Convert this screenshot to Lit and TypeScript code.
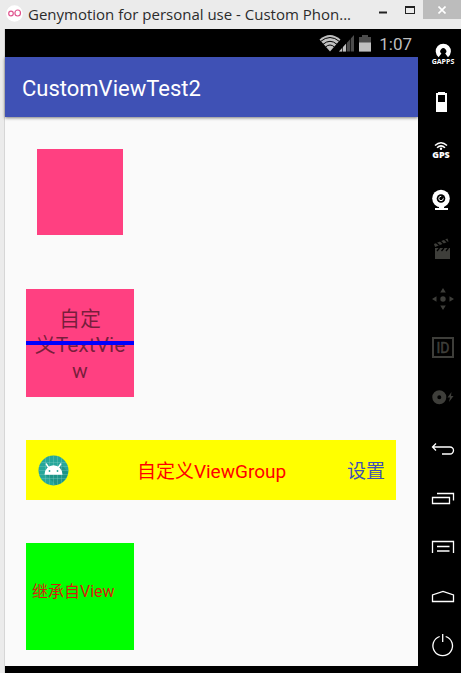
import { LitElement, html, css, svg } from "lit";
import { customElement } from "lit/decorators.js";

interface Tool {
  label: string;
  dim?: boolean;
  art: unknown;
}

const emulatorTools: Tool[] = [
  {
    label: "Open GAPPS",
    art: svg`<path fill="currentColor" d="M14.6 28.2A7.6 7.6 0 1 1 24 28.2L21.2 24.6A3 3 0 1 0 17.4 24.6Z"/>
      <path d="M19.3 21.5V28" stroke="#000" stroke-width="2"/>
      <text x="19" y="35" class="tiny" text-anchor="middle">GAPPS</text>`,
  },
  {
    label: "Battery",
    art: svg`<path fill="currentColor" fill-rule="evenodd" d="M14 14H21V15H23V34H12V15H14ZM14 17V24H21V17Z"/>`,
  },
  {
    label: "GPS",
    art: svg`<g fill="none" stroke="currentColor" stroke-width="1.5">
        <path d="M11 18.5Q17 13 23 18.5"/><path d="M13 20.7Q17 17 21 20.7"/>
      </g><circle cx="17" cy="21.8" r="1.2" fill="currentColor"/>
      <text x="17" y="31" class="small" text-anchor="middle">GPS</text>`,
  },
  {
    label: "Camera",
    art: svg`<circle cx="17" cy="22.5" r="8.8" fill="currentColor"/>
      <path d="M15 30H20V33H15Z" fill="currentColor"/><path d="M11 32H24V34H11Z" fill="currentColor"/>
      <circle cx="17" cy="22.5" r="4.3" fill="#000"/>
      <circle cx="17" cy="22.5" r="2.2" fill="none" stroke="currentColor" stroke-width="1"/>
      <circle cx="18.2" cy="21.3" r="1.4" fill="#000"/>`,
  },
  {
    label: "Screencast",
    dim: true,
    art: svg`<path fill="currentColor" d="M11 23H26V34H11Z"/>
      <path d="M10.5 20.5L24 15" stroke="currentColor" stroke-width="3"/>
      <path d="M12 17.5L15.5 20.5M16 15.8L19.5 19M20 14L23.5 17.5M13 26L15.5 23M17.5 26L20 23M22 26L24.500 23" stroke="#000" stroke-width="1.3"/>`,
  },
  {
    label: "Remote control",
    dim: true,
    art: svg`<g fill="currentColor"><circle cx="19" cy="25" r="2.7"/>
      <path d="M19 14L21.800 18.500H16.200ZM19 36L16.200 31.500H21.800ZM8 25L12.500 22.200V27.800ZM30 25L25.500 27.800V22.200Z"/></g>`,
  },
  {
    label: "Identifiers",
    dim: true,
    art: svg`<rect x="9" y="15" width="20" height="19" fill="none" stroke="currentColor" stroke-width="2"/>
      <text x="19" y="30" class="id" text-anchor="middle">ID</text>`,
  },
  {
    label: "Disk I/O",
    dim: true,
    art: svg`<path fill="currentColor" fill-rule="evenodd" d="M8.300 25.300a7 7 0 1 0 14 0a7 7 0 1 0-14 0ZM13.300 25.300a2 2 0 1 1 4 0a2 2 0 1 1-4 0Z"/>
      <path fill="currentColor" d="M27.500 20L23.500 25.600H26L25 30L29.500 24H27Z"/>`,
  },
];

const navigationTools: Tool[] = [
  { label: "Back", art: svg`<path class="line" d="M12 19.500L8.500 23L12 26.500M8.500 23H26A3.400 3.400 0 0 1 26 30H18"/>` },
  { label: "Recent apps", art: svg`<path class="line" d="M8.500 24.500H25.500V30.500H8.500ZM13 20.500H29.500V27.500"/>` },
  { label: "Menu", art: svg`<path class="line" d="M8.500 31V19.500H29.500V31M13 24.500H25.500M13 29H25.500"/>` },
  { label: "Home", art: svg`<path class="line" d="M8.500 30.500V24L19 20.500L29.500 24V30.500Z"/>` },
  { label: "Power", art: svg`<path class="line" d="M15.700 16.500A9.800 9.800 0 1 0 21.700 16.500M18.700 14V22"/>` },
];

@customElement("tool-rail")
export class ToolRail extends LitElement {
  static styles = css`
    :host { display: flex; flex-direction: column; gap: 3px; background: #000; }
    .group { display: flex; flex-direction: column; }
    button {
      border: 0; padding: 0 0 0 6px; margin: 0; background: none; color: #fff;
      height: 49px; display: flex; cursor: pointer;
    }
    button.dim { color: #3e3e3a; }
    svg { width: 37px; height: 49px; display: block; }
    text { fill: currentColor; font-family: "Open Sans", "Noto Sans", sans-serif; }
    .tiny { font-size: 7px; font-weight: 700; }
    .small { font-size: 9px; font-weight: 800; }
    .id { font: 400 14px Roboto, sans-serif; stroke: currentColor; stroke-width: 0.5px; }
    .line { fill: none; stroke: currentColor; stroke-width: 1.3; }
  `;

  private group(tools: Tool[]) {
    return html`<div class="group">
      ${tools.map(
        (t) => html`<button class=${t.dim ? "dim" : ""} aria-label=${t.label}>
          <svg viewBox="0 0 37 49" aria-hidden="true">${t.art}</svg>
        </button>`
      )}
    </div>`;
  }

  render() {
    return html`${this.group(emulatorTools)}${this.group(navigationTools)}`;
  }
}

@customElement("app-root")
export class AppRoot extends LitElement {
  static styles = css`
    :host {
      display: flex; flex-direction: column; min-height: 100vh; background: #ebebeb;
      font-family: Roboto, "Noto Sans CJK SC", sans-serif;
    }
    * { box-sizing: border-box; }
    button { border: 0; margin: 0; padding: 0; background: none; font: inherit; cursor: pointer; }
    svg { display: block; }

    .titlebar { display: flex; height: 29px; padding-left: 6px; }
    .logo { width: 17px; height: 17px; margin: 5px 5px 0 0; }
    .caption {
      flex: 1; min-width: 0; margin: 0; color: #2b2b2b; white-space: nowrap; overflow: hidden;
      font: 400 15px/28px "Open Sans", "Noto Sans", sans-serif;
    }
    .controls { display: flex; }
    .control { height: 19px; display: flex; align-items: center; justify-content: center; color: #222; }
    .minimize { width: 28px; }
    .maximize { width: 26px; }
    .close { width: 38px; background: #bcbcbc; color: #fff; }

    .workspace { flex: 1; display: grid; grid-template-columns: 1fr 43px; margin-left: 4px; border-left: 1px solid #d6d6d6; background: #000; }
    .device { display: flex; flex-direction: column; min-width: 0; padding-bottom: 7px; }

    .status { height: 28px; display: flex; align-items: center; justify-content: flex-end; padding-right: 6px; }
    .clock { color: #bebebe; font-size: 17px; line-height: 28px; margin-left: 7px; padding-top: 2px; }

    .appbar {
      height: 60px; display: flex; align-items: center; padding: 3px 17px 0; background: #3f51b5;
      position: relative; box-shadow: 0 1px 3px rgba(0, 0, 0, 0.5);
    }
    h1 { margin: 0; color: #fff; font-size: 22px; font-weight: 400; line-height: 28px; }

    main { flex: 1; background: #fafafa; padding: 32px 22px 16px 21px; overflow: hidden; }
    .square { width: 86px; height: 86px; margin: 0 0 54px 11px; background: #ff4081; }
    .struck {
      position: relative; width: 108px; height: 108px; margin: 0 0 43px; padding-top: 17px;
      background: #ff4081; color: rgba(0, 0, 0, 0.54);
      font-size: 21px; line-height: 26px; text-align: center; white-space: nowrap;
    }
    .struck::after { content: ""; position: absolute; left: 0; right: 0; top: 52px; height: 4px; background: #00f; }
    .topbar {
      height: 60px; margin-bottom: 43px; padding: 0 11px 0 12px; background: #ff0;
      display: grid; grid-template-columns: 1fr auto 1fr; align-items: center;
    }
    .topbar h2 { margin: 0; padding-top: 3px; color: #f00; font-size: 19px; font-weight: 400; line-height: 28px; }
    .avatar { justify-self: start; }
    .settings { justify-self: end; padding-top: 3px; color: #3f51b5; font-size: 19px; line-height: 28px; }
    .green { width: 108px; height: 107px; margin: 0; padding: 37px 6px 0; background: #0f0; color: #d81b0e; font-size: 16px; line-height: 24px; white-space: nowrap; }
  `;

  render() {
    return html`
      <header class="titlebar">
        <svg class="logo" viewBox="0 0 17 17" aria-hidden="true">
          <circle cx="8.500" cy="8.500" r="8.300" fill="#fff" />
          <g fill="none" stroke="#e0558f" stroke-width="1.200">
            <circle cx="5" cy="8.500" r="2.300" />
            <ellipse cx="11.700" cy="8" rx="2.800" ry="3" />
          </g>
        </svg>
        <p class="caption">Genymotion for personal use - Custom Phon...</p>
        <div class="controls">
          <button class="control minimize" aria-label="Minimize">
            <svg width="8" height="10" viewBox="0 0 8 10"><path d="M0 6.500H8V8.500H0Z" fill="currentColor" /></svg>
          </button>
          <button class="control maximize" aria-label="Maximize">
            <svg width="10" height="10" viewBox="0 0 10 10"><path fill="currentColor" fill-rule="evenodd" d="M0 1H10V9H0ZM1 3V8H9V3Z" /></svg>
          </button>
          <button class="control close" aria-label="Close">
            <svg width="8" height="8" viewBox="0 0 8 8"><path d="M0.500 0.500L7.500 7.500M7.500 0.500L0.500 7.500" stroke="currentColor" stroke-width="1.600" /></svg>
          </button>
        </div>
      </header>
      <div class="workspace">
        <section class="device">
          <div class="status">
            <svg width="53" height="18" viewBox="0 0 53 18" aria-hidden="true">
              <path d="M0.500 5.500Q11 -3.500 21.500 5.500L11 17.500Z" fill="#c0c0c0" />
              <g fill="none" stroke="#000" stroke-width="1">
                <path d="M1.500 7.500Q11 -0.500 20.500 7.500" /><path d="M4 10.300Q11 4.300 18 10.300" /><path d="M6.500 13Q11 9 15.500 13" />
              </g>
              <path d="M20 17.500L35 1V17.500Z" fill="#4c4c4c" />
              <path d="M20 17.500L27 9.800V17.500Z" fill="#c0c0c0" />
              <path d="M23.500 9V18M27.500 5V18M31.500 2V18" stroke="#000" stroke-width="0.700" />
              <path d="M43 1H49V3H52V17.500H40V3H43Z" fill="#4c4c4c" />
              <path d="M40 8.500H52V17.500H40Z" fill="#c0c0c0" />
            </svg>
            <time class="clock">1:07</time>
          </div>
          <header class="appbar"><h1>CustomViewTest2</h1></header>
          <main>
            <div class="square"></div>
            <p class="struck">自定<br />义TextVie<br />w</p>
            <div class="topbar">
              <button class="avatar" aria-label="Android">
                <svg width="31" height="31" viewBox="0 0 31 31">
                  <circle cx="15.500" cy="15.500" r="15" fill="#26a69a" />
                  <path d="M8 20L24 10L30 17A15 15 0 0 1 18 30Z" fill="#1e9488" />
                  <path d="M7.500 3V28M11.500 1V30M15.500 0.500V30.500M19.500 1V30M23.500 3V28M3 7.500H28M1 11.500H30M0.500 15.500H30.500M1 19.500H30M3 23.500H28" stroke="#80cbc4" stroke-opacity="0.500" stroke-width="0.700" />
                  <path d="M6.500 19.800A9 9.500 0 0 1 24.500 19.800Z" fill="#fff" />
                  <path d="M8.300 9L11 13M22.700 9L20 13" stroke="#fff" stroke-width="1.400" stroke-linecap="round" />
                  <circle cx="11.500" cy="16" r="0.900" fill="#26a69a" /><circle cx="19.500" cy="16" r="0.900" fill="#26a69a" />
                </svg>
              </button>
              <h2>自定义ViewGroup</h2>
              <button class="settings">设置</button>
            </div>
            <p class="green">继承自View</p>
          </main>
        </section>
        <tool-rail></tool-rail>
      </div>
    `;
  }
}
